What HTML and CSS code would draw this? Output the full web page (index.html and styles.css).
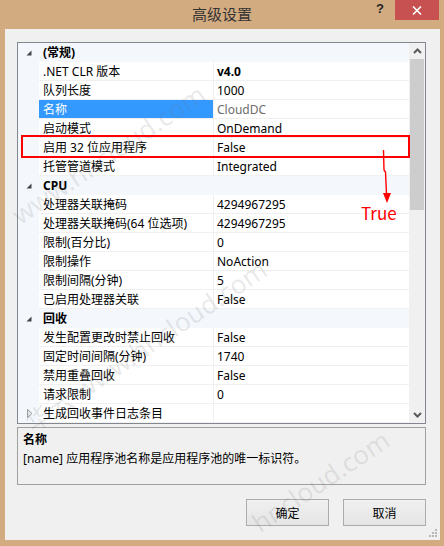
FILE: index.html
```html
<!DOCTYPE html>
<html lang="zh-CN">
<head>
<meta charset="utf-8">
<title>高级设置</title>
<link rel="stylesheet" href="styles.css">
</head>
<body>
<div class="window">
  <div class="titlebar">
    <div class="title">高级设置</div>
    <div class="controls">
      <div class="help">?</div>
      <div class="close">
        <svg width="10" height="9" viewBox="0 0 10 9"><path d="M1 0.5 L9 8.5 M9 0.5 L1 8.5" stroke="#fff" stroke-width="1.6" fill="none"/></svg>
      </div>
    </div>
  </div>
  <div class="client">
    <div class="grid">
      <div class="rows">
        <div class="row cat"><div class="gut"><svg class="exp" width="6" height="6" viewBox="0 0 6 6"><polygon points="5.5,0.5 5.5,5.5 0.5,5.5" fill="#444"/></svg></div><div class="name">(常规)</div></div>
        <div class="row"><div class="gut"></div><div class="name">.NET CLR 版本</div><div class="val bold">v4.0</div></div>
        <div class="row"><div class="gut"></div><div class="name">队列长度</div><div class="val">1000</div></div>
        <div class="row"><div class="gut"></div><div class="name sel">名称</div><div class="val ro">CloudDC</div></div>
        <div class="row"><div class="gut"></div><div class="name">启动模式</div><div class="val">OnDemand</div></div>
        <div class="row"><div class="gut"></div><div class="name">启用 32 位应用程序</div><div class="val">False</div></div>
        <div class="row"><div class="gut"></div><div class="name">托管管道模式</div><div class="val">Integrated</div></div>
        <div class="row cat"><div class="gut"><svg class="exp" width="6" height="6" viewBox="0 0 6 6"><polygon points="5.5,0.5 5.5,5.5 0.5,5.5" fill="#444"/></svg></div><div class="name">CPU</div></div>
        <div class="row"><div class="gut"></div><div class="name">处理器关联掩码</div><div class="val">4294967295</div></div>
        <div class="row"><div class="gut"></div><div class="name">处理器关联掩码(64 位选项)</div><div class="val">4294967295</div></div>
        <div class="row"><div class="gut"></div><div class="name">限制(百分比)</div><div class="val">0</div></div>
        <div class="row"><div class="gut"></div><div class="name">限制操作</div><div class="val">NoAction</div></div>
        <div class="row"><div class="gut"></div><div class="name">限制间隔(分钟)</div><div class="val">5</div></div>
        <div class="row"><div class="gut"></div><div class="name">已启用处理器关联</div><div class="val">False</div></div>
        <div class="row cat"><div class="gut"><svg class="exp" width="6" height="6" viewBox="0 0 6 6"><polygon points="5.5,0.5 5.5,5.5 0.5,5.5" fill="#444"/></svg></div><div class="name">回收</div></div>
        <div class="row"><div class="gut"></div><div class="name">发生配置更改时禁止回收</div><div class="val">False</div></div>
        <div class="row"><div class="gut"></div><div class="name">固定时间间隔(分钟)</div><div class="val">1740</div></div>
        <div class="row"><div class="gut"></div><div class="name">禁用重叠回收</div><div class="val">False</div></div>
        <div class="row"><div class="gut"></div><div class="name">请求限制</div><div class="val">0</div></div>
        <div class="row"><div class="gut"><svg class="col" width="6" height="9" viewBox="0 0 6 9"><polygon points="0.5,0.5 5,4.5 0.5,8.5" fill="none" stroke="#9a9a9a" stroke-width="1"/></svg></div><div class="name">生成回收事件日志条目</div><div class="val"></div></div>
      </div>
      <div class="scrollbar">
        <div class="sb-btn"><svg width="9" height="6" viewBox="0 0 9 6"><polyline points="1,5 4.5,1.5 8,5" fill="none" stroke="#5a5a5a" stroke-width="2"/></svg></div>
        <div class="thumb"></div>
        <div class="track"></div>
        <div class="sb-btn"><svg width="9" height="6" viewBox="0 0 9 6"><polyline points="1,1 4.5,4.5 8,1" fill="none" stroke="#5a5a5a" stroke-width="2"/></svg></div>
      </div>
    </div>
    <div class="desc">
      <div class="desc-title">名称</div>
      <div class="desc-text">[name] 应用程序池名称是应用程序池的唯一标识符。</div>
    </div>
    <div class="buttons">
      <button class="btn">确定</button>
      <button class="btn">取消</button>
    </div>
    <svg class="grip" width="8" height="8" viewBox="0 0 8 8">
      <rect x="6" y="0" width="2" height="2" fill="#b8b8b8"/>
      <rect x="3" y="3" width="2" height="2" fill="#b8b8b8"/>
      <rect x="6" y="3" width="2" height="2" fill="#b8b8b8"/>
      <rect x="0" y="6" width="2" height="2" fill="#b8b8b8"/>
      <rect x="3" y="6" width="2" height="2" fill="#b8b8b8"/>
      <rect x="6" y="6" width="2" height="2" fill="#b8b8b8"/>
    </svg>
  </div>
  <div class="overlay">
    <span class="wm wm1">www.hncloud.com</span>
    <span class="wm wm2">华云 www.hncloud.com</span>
    <span class="wm wm3">hncloud.com</span>
    <div class="mark"></div>
    <svg class="arrow" width="444" height="546" viewBox="0 0 444 546">
      <polyline points="383.5,150 384,170 385.5,172 386.5,194" fill="none" stroke="#f00" stroke-width="1.4"/>
      <polygon points="383,193 391,193 387,203" fill="#f00"/>
    </svg>
    <span class="true">True</span>
  </div>
</div>
</body>
</html>
```
FILE: styles.css
```css
* { box-sizing: border-box; }

body {
  margin: 0;
  background: #d3ab80;
  font-family: "Noto Sans", "Noto Sans CJK SC", sans-serif;
  font-size: 12px;
  color: #000;
}

.window {
  position: relative;
  width: 444px;
  height: 546px;
  display: flex;
  flex-direction: column;
  background: #d3ab80;
  overflow: hidden;
}

.titlebar {
  height: 29px;
  display: grid;
  grid-template-columns: 1fr auto 1fr;
}

.title {
  grid-column: 2;
  font-family: "Noto Sans CJK SC", sans-serif;
  font-size: 15px;
  line-height: 28px;
  color: #333;
}

.controls {
  grid-column: 3;
  justify-self: end;
  display: flex;
  align-items: flex-start;
  margin-right: 5px;
}

.help {
  font-family: "Liberation Sans", sans-serif;
  font-weight: bold;
  font-size: 13px;
  line-height: 18px;
  color: #262626;
  margin-right: 11px;
}

.close {
  width: 44px;
  height: 20px;
  background: #c75050;
  display: flex;
  align-items: center;
  justify-content: center;
}

.client {
  flex: 1;
  position: relative;
  margin: 0 4px 6px 5px;
  background: #f0f0f0;
  padding: 13px 14px 14px 12px;
  display: flex;
  flex-direction: column;
}

.grid {
  height: 382px;
  border: 1px solid #828790;
  background: #fff;
  display: flex;
}

.rows {
  width: 391px;
}

.row {
  display: grid;
  grid-template-columns: 21px 174px 196px;
  height: 19px;
}

.gut {
  background: #f4f7fc;
  display: flex;
  align-items: center;
  justify-content: center;
}

.gut .col { margin-left: 3px; }

.name {
  padding-left: 4px;
  padding-top: 1px;
  line-height: 17px;
  white-space: nowrap;
  border-bottom: 1px solid #f0f0f0;
}

.val {
  padding-left: 3px;
  padding-top: 1px;
  line-height: 17px;
  white-space: nowrap;
  border-left: 1px solid #f0f0f0;
  border-bottom: 1px solid #f0f0f0;
}

.bold { font-weight: bold; }

.ro { color: #6d6d6d; }

.sel {
  background: #3399ff;
  color: #fff;
}

.row.cat {
  grid-template-columns: 21px 1fr;
  background: #f4f7fc;
}

.row.cat .name {
  font-weight: bold;
  border-bottom: none;
}

.scrollbar {
  width: 16px;
  background: #f0f0f0;
  display: flex;
  flex-direction: column;
}

.sb-btn {
  height: 16px;
  display: flex;
  align-items: center;
  justify-content: center;
}

.thumb {
  height: 151px;
  margin: 0 1px;
  background: #cdcdcd;
}

.track { flex: 1; }

.desc {
  margin-top: 3px;
  height: 58px;
  border: 1px solid #a0a0a0;
  padding: 2px 5px;
}

.desc-title {
  font-weight: bold;
  line-height: 19px;
}

.desc-text {
  line-height: 19px;
}

.buttons {
  margin-top: 14px;
  display: flex;
  justify-content: flex-end;
  gap: 14px;
}

.btn {
  width: 83px;
  height: 27px;
  border: 1px solid #acacac;
  background: linear-gradient(#f0f0f0, #e5e5e5);
  font: inherit;
  color: #000;
  padding: 0;
  margin: 0;
}

.grip {
  position: absolute;
  right: 3px;
  bottom: 3px;
}

.overlay {
  position: absolute;
  inset: 0;
  pointer-events: none;
}

.wm {
  position: absolute;
  font-family: "Noto Sans", "Noto Sans CJK SC", sans-serif;
  font-size: 26px;
  line-height: 26px;
  white-space: nowrap;
  color: rgba(120, 120, 120, 0.16);
  transform-origin: 0 100%;
  transform: rotate(-34deg);
}

.wm1 { left: 22px; top: 202px; }
.wm2 { left: 35px; top: 410px; }
.wm3 { left: 262px; top: 510px; }

.mark {
  position: absolute;
  left: 21px;
  top: 135px;
  width: 389px;
  height: 23px;
  border: 2px solid #f00;
}

.arrow {
  position: absolute;
  left: 0;
  top: 0;
}

.true {
  position: absolute;
  left: 361px;
  top: 203px;
  font-family: "Noto Sans CJK SC", sans-serif;
  font-size: 17px;
  line-height: 20px;
  color: #f00;
}
```
